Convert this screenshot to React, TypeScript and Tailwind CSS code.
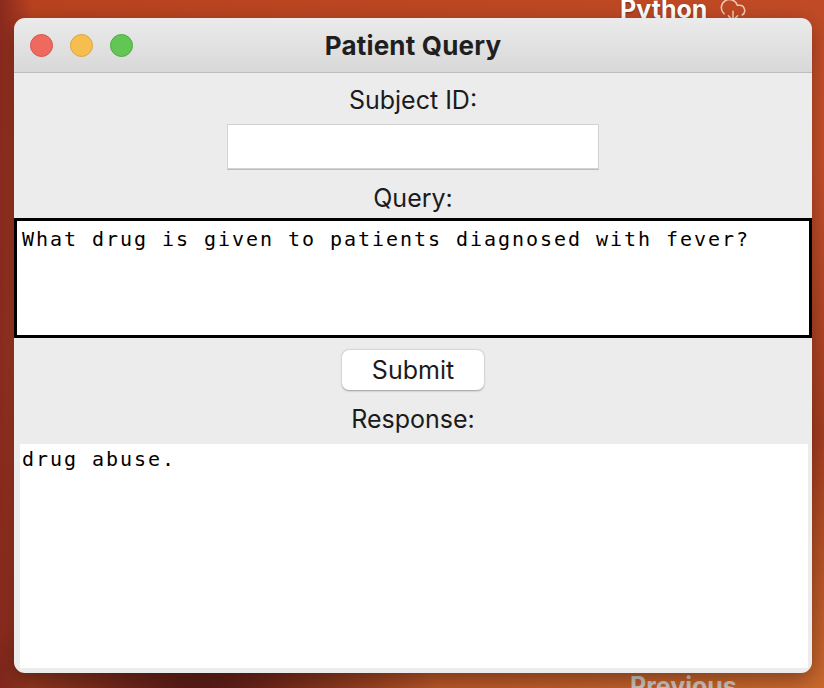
import { CloudDownload } from "lucide-react";

const sans = "font-['Inter','Liberation_Sans',sans-serif]";
const mono = "font-['DejaVu_Sans_Mono','Liberation_Mono',monospace]";

function Label({ text, className = "" }: { text: string; className?: string }) {
  return <div className={`${sans} text-[25px] leading-[30px] text-[#1b1b1b] ${className}`}>{text}</div>;
}

export default function App() {
  return (
    <div className="relative w-[824px] h-[688px] overflow-hidden px-[14px] pt-[18px] bg-[radial-gradient(ellipse_240px_120px_at_200px_700px,#4f1414_0%,rgba(79,20,20,0)_100%),linear-gradient(90deg,#8a2a1e_0%,rgba(138,42,30,0)_4%),linear-gradient(165deg,#b8421f_0%,#c6502a_40%,#a43d1f_72%,#c9682d_100%)]">
      {/* desktop items behind the window */}
      <div className={`absolute left-[620px] top-[-9px] flex items-center gap-[12px] ${sans}`}>
        <span className="text-[25px] font-bold text-white [text-shadow:0_1px_2px_rgba(0,0,0,0.4)]">Python</span>
        <CloudDownload className="w-[28px] h-[28px] text-[#f3cbb8]" strokeWidth={1.3} />
      </div>
      <div className={`absolute left-[630px] top-[668px] text-[25px] font-bold text-[#cfc4bf] ${sans}`}>Previous</div>

      <div className="relative w-[798px] h-[655px] rounded-[11px] overflow-hidden shadow-[0_6px_20px_rgba(0,0,0,0.35)] flex flex-col">
        {/* title bar */}
        <div className="h-[55px] shrink-0 grid grid-cols-[1fr_auto_1fr] items-center bg-linear-to-b from-[#ebebeb] to-[#d8d8d8] border-b border-[#bdbdbd]">
          <div className="flex items-center gap-[17px] pl-[16px]">
            <span className="w-[23px] h-[23px] rounded-full bg-[#ee6a5f] border border-[#d9544a]" />
            <span className="w-[23px] h-[23px] rounded-full bg-[#f6be4f] border border-[#dfa53a]" />
            <span className="w-[23px] h-[23px] rounded-full bg-[#62c554] border border-[#4eab41]" />
          </div>
          <div className={`${sans} text-[26px] font-bold tracking-[0.2px] text-[#1f1f1f]`}>Patient Query</div>
          <div />
        </div>

        {/* body */}
        <div className="flex-1 flex flex-col items-center bg-[#ececec] pt-[12px] pb-[5px]">
          <Label text="Subject ID:" />
          <div className="mt-[9px] w-[372px] h-[45px] bg-white border border-[#d3d3d3] shadow-[0_1px_0_#bdbdbd]" />

          <Label text="Query:" className="mt-[14px]" />
          <div className="mt-[5px] w-full h-[120px] bg-white border-[3px] border-black pl-[5px] pt-[7px]">
            <div className={`${mono} text-[20px] leading-[22px] tracking-[1.96px] text-black whitespace-nowrap`}>
              What drug is given to patients diagnosed with fever?
            </div>
          </div>

          <button className={`mt-[12px] w-[142px] h-[40px] rounded-[7px] bg-white shadow-[0_0.5px_2px_rgba(0,0,0,0.35)] ${sans} text-[25px] leading-[30px] text-[#1b1b1b]`}>
            Submit
          </button>

          <Label text="Response:" className="mt-[14px]" />
          <div className="mt-[10px] self-stretch ml-[6px] mr-[4px] flex-1 bg-white pl-[2px] pt-[4px]">
            <div className={`${mono} text-[20px] leading-[22px] tracking-[1.96px] text-black whitespace-nowrap`}>
              drug abuse.
            </div>
          </div>
        </div>
      </div>
    </div>
  );
}
